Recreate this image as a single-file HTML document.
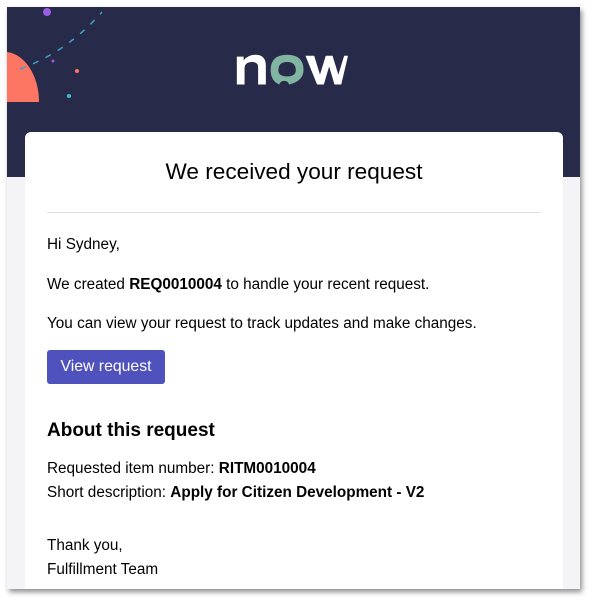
<!DOCTYPE html>
<html><head><meta charset="utf-8"><style>
*{margin:0;padding:0;box-sizing:border-box}
body{width:596px;height:602px;background:#fff;position:relative;overflow:hidden;font-family:"Liberation Sans",Arial,sans-serif;color:#000}
.frame{position:absolute;left:7px;top:7px;width:573px;height:582px;background:#f4f4f7;overflow:hidden;box-shadow:2px 3px 5px rgba(0,0,0,.45)}
.banner{position:absolute;left:0;top:0;width:573px;height:170px;background:#282a4a}
.card{position:absolute;left:18px;top:125px;width:538px;height:470px;background:#fff;border-radius:6px}
.t{position:absolute;left:22px;font-size:15.3px;white-space:nowrap;line-height:18px}
</style></head><body>
<div class="frame">
<div class="banner">
<svg width="120" height="110" style="position:absolute;left:0;top:0">
<path d="M0 45 A35 50 0 0 1 32 95 L0 95 Z" fill="#fd7563"/>
<path d="M13 62 Q60 45 95 5" stroke="#3aa3c0" stroke-width="1.5" fill="none" stroke-dasharray="6 8"/>
<circle cx="40" cy="5" r="4" fill="#9b5de5"/>
<circle cx="46" cy="54" r="1.5" fill="#9b5de5"/>
<circle cx="70" cy="64" r="2" fill="#fd7563"/>
<circle cx="62" cy="89" r="2" fill="#3ec0d8"/>
</svg>
<svg width="120" height="40" viewBox="0 0 120 40" style="position:absolute;left:225px;top:46px;width:116px;height:36px" preserveAspectRatio="none">
<path d="M5 35 V4 H12 V8 Q17 2 24 2 Q35 2 35 14 V35 H27 V16 Q27 10 21 10 Q13 10 13 17 V35 Z" fill="#fff"/>
<path d="M59 35 Q58 31 54 31 Q50 31 49 35 Q40 31 40 19 Q40 2 57 2 Q74 2 74 19 Q74 31 59 35 Z M57 10 Q48 10 48 19 Q48 26 57 26 Q66 26 66 19 Q66 10 57 10 Z" fill="#81b5a1" fill-rule="evenodd"/>
<path d="M76 3 H85 L91 24 L97 3 H104 L110 24 L116 3 H120 L113 35 H106 L100.5 15 L95 35 H88 Z" fill="#fff"/>
</svg>
</div>
<div class="card">
<div style="position:absolute;left:0;width:538px;top:27px;text-align:center;font-size:22.6px">We received your request</div>
<div style="position:absolute;left:22px;top:80px;width:493px;height:1px;background:#dcdce2"></div>
<div class="t" style="top:104px">Hi Sydney,</div>
<div class="t" style="top:144px">We created <b>REQ0010004</b> to handle your recent request.</div>
<div class="t" style="top:183px">You can view your request to track updates and make changes.</div>
<div style="position:absolute;left:22px;top:218px;width:118px;height:34px;background:#4f52bd;border-radius:3px;color:#fff;font-size:15.8px;line-height:34px;text-align:center">View request</div>
<div class="t" style="top:288px;font-size:19px;font-weight:bold;line-height:22px">About this request</div>
<div class="t" style="top:328px">Requested item number: <b>RITM0010004</b></div>
<div class="t" style="top:352px">Short description: <b>Apply for Citizen Development - V2</b></div>
<div class="t" style="top:405px">Thank you,</div>
<div class="t" style="top:429px">Fulfillment Team</div>
</div>
</div>
</body></html>
